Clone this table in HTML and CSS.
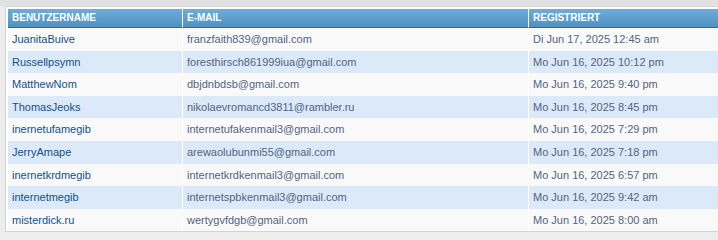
FILE: index.html
```html
<!DOCTYPE html>
<html lang="de">
<head>
<meta charset="utf-8">
<title>Mitglieder</title>
<link rel="stylesheet" href="styles.css">
</head>
<body>
<div class="topband"></div>
<div class="panel">
  <table class="members">
    <thead>
      <tr>
        <th class="c-name">Benutzername</th>
        <th class="c-mail">E-Mail</th>
        <th class="c-date">Registriert</th>
      </tr>
    </thead>
    <tbody>
      <tr class="bg1"><td><a href="#">JuanitaBuive</a></td><td>franzfaith839@gmail.com</td><td>Di Jun 17, 2025 12:45 am</td></tr>
      <tr class="bg2"><td><a href="#">Russellpsymn</a></td><td>foresthirsch861999iua@gmail.com</td><td>Mo Jun 16, 2025 10:12 pm</td></tr>
      <tr class="bg1"><td><a href="#">MatthewNom</a></td><td>dbjdnbdsb@gmail.com</td><td>Mo Jun 16, 2025 9:40 pm</td></tr>
      <tr class="bg2"><td><a href="#">ThomasJeoks</a></td><td>nikolaevromancd3811@rambler.ru</td><td>Mo Jun 16, 2025 8:45 pm</td></tr>
      <tr class="bg1"><td><a href="#">inernetufamegib</a></td><td>internetufakenmail3@gmail.com</td><td>Mo Jun 16, 2025 7:29 pm</td></tr>
      <tr class="bg2"><td><a href="#">JerryAmape</a></td><td>arewaolubunmi55@gmail.com</td><td>Mo Jun 16, 2025 7:18 pm</td></tr>
      <tr class="bg1"><td><a href="#">inernetkrdmegib</a></td><td>internetkrdkenmail3@gmail.com</td><td>Mo Jun 16, 2025 6:57 pm</td></tr>
      <tr class="bg2"><td><a href="#">internetmegib</a></td><td>internetspbkenmail3@gmail.com</td><td>Mo Jun 16, 2025 9:42 am</td></tr>
      <tr class="bg1"><td><a href="#">misterdick.ru</a></td><td>wertygvfdgb@gmail.com</td><td>Mo Jun 16, 2025 8:00 am</td></tr>
    </tbody>
  </table>
</div>
</body>
</html>
```
FILE: styles.css
```css
html, body {
  margin: 0;
  padding: 0;
  overflow: hidden;
}
body {
  background: #ededee;
  font-family: "Liberation Sans", Arial, sans-serif;
  width: 718px;
  height: 240px;
}
.topband {
  height: 6px;
  background: #e1e2e4;
}
.panel {
  margin-left: 5px;
  width: 710px;
  overflow: hidden;
  background: #ffffff;
  border: 1px solid #d2d3d5;
  border-right: none;
  padding: 2px 0 0 2px;
}
.members {
  border-collapse: separate;
  border-spacing: 0;
  table-layout: fixed;
  width: 710px;
}
.members th {
  background: linear-gradient(#6fadd8, #4e91c3);
  border-bottom: 1px solid #2f6b99;
  color: #ffffff;
  font-size: 10px;
  font-weight: bold;
  text-transform: uppercase;
  text-align: left;
  height: 18px;
  padding: 0 4px;
  line-height: 18px;
}
.members td {
  font-size: 11px;
  color: #536482;
  padding: 4px 4px;
  line-height: 14.6px;
  white-space: nowrap;
  overflow: hidden;
}
.members th + th,
.members td + td {
  border-left: 1px solid #ffffff;
}
.c-name { width: 166px; }
.c-mail { width: 337px; }
.members a {
  color: #105289;
  text-decoration: none;
}
.bg1 td { background: #f9f9f9; }
.bg2 td { background: #dce9f9; }
```
